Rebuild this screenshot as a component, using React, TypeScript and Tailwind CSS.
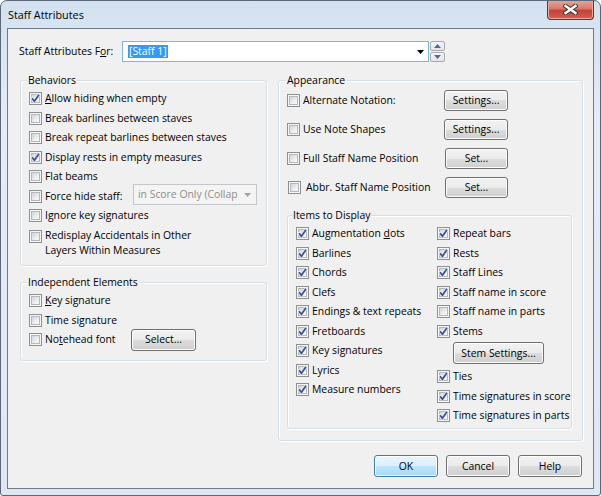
import type { ReactNode } from "react";

const font = "font-['Open_Sans','Noto_Sans',sans-serif] text-[10.4px] leading-[15px] text-black";

function CheckBox({ checked }: { checked?: boolean }) {
  return (
    <span className="relative block h-[13px] w-[13px] shrink-0 border border-[#8e8f8f] bg-[#f6f6f6] p-[1px]">
      <span className="block h-full w-full border border-[#b4b8bd] bg-[linear-gradient(135deg,#d2d5da_0%,#eceef0_60%,#fbfbfb_100%)]" />
      {checked && (
        <svg className="absolute left-[-1px] top-[-1px]" width="13" height="13" viewBox="0 0 13 13">
          <polyline points="3,6.3 5.4,9.2 10,2.8" fill="none" stroke="#e8eefa" strokeWidth="3" strokeLinecap="round" />
          <polyline points="3,6.3 5.4,9.2 10,2.8" fill="none" stroke="#3f5290" strokeWidth="1.8" />
        </svg>
      )}
    </span>
  );
}

function Row({ checked, children, className = "" }: { checked?: boolean; children: ReactNode; className?: string }) {
  return (
    <div className={`flex h-[19.5px] items-center ${className}`}>
      <CheckBox checked={checked} />
      <span className="ml-[3px] whitespace-nowrap">{children}</span>
    </div>
  );
}

function WinButton({ children, className = "", primary }: { children: ReactNode; className?: string; primary?: boolean }) {
  const skin = primary
    ? "border-[#3c7fb1] bg-[linear-gradient(#eaf6fd_0%,#d9f0fc_50%,#bee6fd_50%,#a7d9f5_100%)]"
    : "border-[#707070] bg-[linear-gradient(#f2f2f2_0%,#ebebeb_50%,#dddddd_50%,#cfcfcf_100%)]";
  return (
    <div
      className={`flex shrink-0 items-center justify-center rounded-[3px] border shadow-[inset_0_0_0_1px_#fcfcfc] ${skin} ${className}`}
    >
      {children}
    </div>
  );
}

function Group({ title, className = "", titleLeft = "left-[6px]", children }: { title: string; className?: string; titleLeft?: string; children: ReactNode }) {
  return (
    <div className={`relative rounded-[3px] border border-[#d5dfe5] shadow-[inset_1px_1px_0_#ffffff,1px_1px_0_#ffffff] ${className}`}>
      <span className={`absolute top-[-8px] bg-[#f0f0f0] px-[1px] whitespace-nowrap ${titleLeft}`}>{title}</span>
      {children}
    </div>
  );
}

export default function App() {
  return (
    <div className={`relative h-[496px] w-[601px] overflow-hidden rounded-t-[7px] rounded-b-[3px] border border-[#5b6877] bg-[linear-gradient(180deg,#d3e1f0_0%,#e4ecf6_25%,#dfe8f2_100%)] ${font}`}>
      {/* title bar */}
      <div className="flex h-[27px] items-center pl-[7px] text-[10.8px]">Staff Attributes</div>
      <div className="absolute right-[6px] top-[-1px] h-[20px] w-[47px] rounded-b-[4px] border border-t-0 border-[#70302a] bg-[linear-gradient(180deg,#e6a89c_0%,#d77a6c_45%,#c4443a_55%,#d0604f_100%)] shadow-[inset_0_0_0_1px_#eba99d]">
        <svg className="absolute left-[15px] top-[4px]" width="15" height="11" viewBox="0 0 15 11">
          <path d="M2.5 2 L12.5 9 M12.5 2 L2.5 9" stroke="#3a3a3a" strokeWidth="4.4" strokeLinecap="square" />
          <path d="M2.5 2 L12.5 9 M12.5 2 L2.5 9" stroke="#ffffff" strokeWidth="2.4" strokeLinecap="square" />
        </svg>
      </div>

      {/* client area */}
      <div className="ml-[6px] h-[461px] w-[587px] border border-[#6f7b87] bg-[#f0f0f0]">
        <div className="mt-[12px] flex h-[21px] items-center pl-[11px]">
          <span className="w-[103px] whitespace-nowrap">
            Staff Attributes F<u>o</u>r:
          </span>
          <div className="flex h-[21px] w-[307px] items-center border border-[#7eb4ea] bg-white">
            <span className="ml-[5px] bg-[#3399ff] px-[1px] leading-[13px] text-white">[Staff 1]</span>
            <svg className="ml-auto mr-[4px]" width="7" height="4" viewBox="0 0 7 4">
              <path d="M0 0 H7 L3.5 4 Z" fill="#000" />
            </svg>
          </div>
          <div className="ml-[1px] flex h-[21px] w-[15px] flex-col gap-[1px]">
            {[0, 1].map((i) => (
              <div
                key={i}
                className="flex flex-1 items-center justify-center rounded-[2px] border border-[#a7abb0] bg-[linear-gradient(#f6f6f6,#e4e4e4)]"
              >
                <svg width="7" height="4" viewBox="0 0 7 4">
                  <path d={i === 0 ? "M0 4 H7 L3.5 0 Z" : "M0 0 H7 L3.5 4 Z"} fill="#4d6aa8" />
                </svg>
              </div>
            ))}
          </div>
        </div>

        <div className="mt-[18px] flex gap-[11px] pl-[12px]">
          <div className="flex w-[247px] flex-col">
            <Group title="Behaviors" className="h-[186px] pl-[8px] pt-[8px]">
              <Row checked>
                <u>A</u>llow hiding when empty
              </Row>
              <Row>Break barlines between staves</Row>
              <Row>Break repeat barlines between staves</Row>
              <Row checked>Display rests in empty measures</Row>
              <Row>Flat beams</Row>
              <div className="flex h-[19.5px] items-center">
                <CheckBox />
                <span className="ml-[3px] w-[88px] whitespace-nowrap">Force hide staff:</span>
                <div className="mt-[-3px] flex h-[21px] w-[124px] items-center border border-[#c3c7cb] bg-[#f4f4f4] pl-[4px] text-[#8d8d8d]">
                  <span className="whitespace-nowrap">in Score Only (Collap</span>
                  <svg className="ml-auto mr-[5px]" width="7" height="4" viewBox="0 0 7 4">
                    <path d="M0 0 H7 L3.5 4 Z" fill="#a3a3a3" />
                  </svg>
                </div>
              </div>
              <Row>Ignore key signatures</Row>
              <div className="flex items-start pt-[4.5px]">
                <CheckBox />
                <span className="ml-[3px] mt-[-2.5px] whitespace-nowrap">
                  Redisplay Accidentals in Other
                  <br />
                  Layers Within Measures
                </span>
              </div>
            </Group>

            <Group title="Independent Elements" className="mt-[16px] h-[79px] pl-[8px] pt-[8px]">
              <Row>
                <u>K</u>ey signature
              </Row>
              <Row>
                Time si<u>g</u>nature
              </Row>
              <div className="flex h-[19.5px] items-center">
                <CheckBox />
                <span className="ml-[3px] w-[86px] whitespace-nowrap">
                  No<u>t</u>ehead font
                </span>
                <WinButton className="h-[22px] w-[65px]">Select...</WinButton>
              </div>
            </Group>
          </div>

          <Group title="Appearance" titleLeft="left-[7px]" className="flex h-[361px] w-[305px] flex-col pl-[8px] pt-[9px]">
            <div className="flex flex-col gap-[8px]">
              {[
                ["Alternate Notation:", "Settings..."],
                ["Use Note Shapes", "Settings..."],
                ["Full Staff Name Position", "Set..."],
              ].map(([label, btn]) => (
                <div key={label} className="flex h-[21px] items-center">
                  <CheckBox />
                  <span className="w-[144px] whitespace-nowrap pl-[3px]">{label}</span>
                  <WinButton className={`h-[21px] ${btn === "Set..." ? "ml-[1px] w-[63px]" : "w-[64px]"}`}>{btn}</WinButton>
                </div>
              ))}
              <div className="flex h-[21px] items-center">
                <span className="ml-[1px]">
                  <CheckBox />
                </span>
                <span className="w-[144px] whitespace-nowrap pl-[5px]">Abbr. Staff Name Position</span>
                <WinButton className="h-[21px] w-[63px]">Set...</WinButton>
              </div>
            </div>

            <Group title="Items to Display" titleLeft="left-[4px]" className="mb-[11px] mr-[10px] mt-[17px] flex h-[214px] pl-[8px] pt-[8px]">
              <div className="flex w-[141px] flex-col">
                <Row checked>
                  Augmentation <u>d</u>ots
                </Row>
                <Row checked>Barlines</Row>
                <Row checked>Chords</Row>
                <Row checked>Clefs</Row>
                <Row checked>Endings &amp; text repeats</Row>
                <Row checked>Fretboards</Row>
                <Row checked>Key signatures</Row>
                <Row checked>Lyrics</Row>
                <Row checked>Measure numbers</Row>
              </div>
              <div className="flex flex-col">
                <Row checked>Repeat bars</Row>
                <Row checked>Rests</Row>
                <Row checked>Staff Lines</Row>
                <Row checked>Staff name in score</Row>
                <Row>Staff name in parts</Row>
                <Row checked>Stems</Row>
                <div className="h-[26px] pl-[16px] pt-[1px]">
                  <WinButton className="h-[22px] w-[91px]">Stem Settings...</WinButton>
                </div>
                <Row checked>Ties</Row>
                <Row checked>Time signatures in score</Row>
                <Row checked>Time signatures in parts</Row>
              </div>
            </Group>
          </Group>
        </div>

        <div className="mt-[14px] flex justify-end gap-[8px] pr-[11px]">
          <WinButton primary className="h-[22px] w-[64px]">
            OK
          </WinButton>
          <WinButton className="h-[22px] w-[64px]">Cancel</WinButton>
          <WinButton className="h-[22px] w-[64px]">Help</WinButton>
        </div>
      </div>
    </div>
  );
}
